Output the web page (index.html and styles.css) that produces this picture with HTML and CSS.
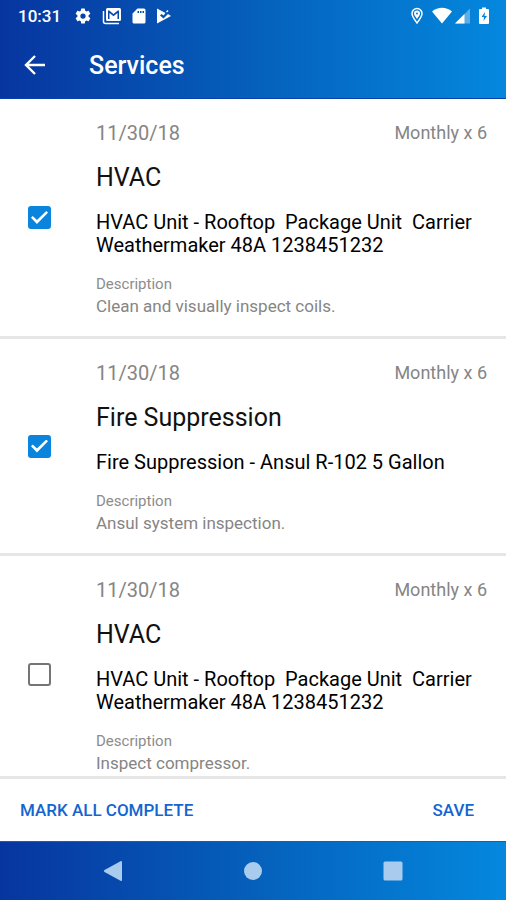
FILE: index.html
```html
<!DOCTYPE html>
<html lang="en">
<head>
  <meta charset="utf-8">
  <meta name="viewport" content="width=device-width, initial-scale=1">
  <title>Services</title>
  <link rel="stylesheet" href="styles.css">
</head>
<body>
  <header class="top">
    <div class="status">
      <span class="clock">10:31</span>
      <div class="status-left">
        <svg width="18" height="18" viewBox="0 0 24 24" aria-hidden="true"><path fill="currentColor" d="M19.4 13a7.500 7.500 0 0 0 0-2l2.100-1.650a.5.5 0 0 0 .12-.64l-2-3.460a.5.5 0 0 0-.61-.22l-2.490 1a7.300 7.300 0 0 0-1.690-.98l-.38-2.650A.5.5 0 0 0 14 2h-4a.5.5 0 0 0-.49.42l-.38 2.650c-.61.25-1.170.58-1.690.98l-2.490-1a.5.5 0 0 0-.61.22l-2 3.460a.5.5 0 0 0 .12.64L4.570 11a7.900 7.900 0 0 0 0 2l-2.110 1.650a.5.5 0 0 0-.12.64l2 3.460c.12.22.39.3.61.22l2.490-1c.52.4 1.080.73 1.690.98l.38 2.650c.03.24.24.42.49.42h4c.25 0 .46-.18.49-.42l.38-2.650c.61-.25 1.170-.58 1.690-.98l2.490 1c.22.08.49 0 .61-.22l2-3.460a.5.5 0 0 0-.12-.64zM12 15.500a3.500 3.500 0 1 1 0-7 3.500 3.500 0 0 1 0 7z"/></svg>
        <svg width="20" height="18" viewBox="0 0 20 18" aria-hidden="true"><path fill="none" stroke="currentColor" stroke-width="1.500" d="M1.500 4v10.500a2 2 0 0 0 2 2H17"/><path fill="currentColor" fill-rule="evenodd" d="M5.500 1h12A1.500 1.500 0 0 1 19 2.500v10a1.500 1.500 0 0 1-1.500 1.500h-12A1.500 1.500 0 0 1 4 12.500v-10A1.500 1.500 0 0 1 5.500 1zM6 3.500V12h1.500V6l4 3.300 4-3.300v6H17V3.500h-1.200l-4.300 3.600-4.300-3.600z"/></svg>
        <svg width="14" height="18" viewBox="0 0 14 18" aria-hidden="true"><path fill="currentColor" fill-rule="evenodd" d="M5.500 1.500H12A1.500 1.500 0 0 1 13.500 3v12a1.500 1.500 0 0 1-1.500 1.500H2A1.500 1.500 0 0 1 .5 15V6.500zM5.500 4v2H7V4zm2.500 0v2h1.500V4zm2.500 0v2H12V4z"/></svg>
        <svg width="16" height="18" viewBox="0 0 16 18" aria-hidden="true"><path fill="currentColor" d="M1 1.500 9.500 6 7.500 8.500 5.500 7 4 8.500l3.500 3L12 7l3 2L1 16.500z"/><path fill="currentColor" d="m10 4.500 1.500-1.500 1 1-1.500 1.500z"/></svg>
      </div>
      <div class="status-right">
        <svg width="14" height="18" viewBox="0 0 14 18" aria-hidden="true"><path fill="none" stroke="currentColor" stroke-width="1.500" d="M7 16C4 12 2 9.500 2 6.500a5 5 0 0 1 10 0C12 9.500 10 12 7 16z"/><path fill="currentColor" d="M7 3.500a3 3 0 0 1 3 3C10 8.500 8.500 9.500 7 12 5.500 9.500 4 8.500 4 6.500a3 3 0 0 1 3-3z"/><circle cx="7" cy="6.500" r="1" fill="#0777cf"/></svg>
        <svg class="wifi" width="20" height="18" viewBox="0 0 20 18" aria-hidden="true"><path fill="currentColor" d="M0 4.500C6-.4 14-.4 20 4.500L10 16.500z"/></svg>
        <svg width="15" height="18" viewBox="0 0 15 18" aria-hidden="true"><path fill="currentColor" opacity=".35" d="M15 1.500v15H0z"/><path fill="currentColor" d="M9.500 7v9.500H0z"/></svg>
        <svg class="battery" width="12" height="18" viewBox="0 0 12 18" aria-hidden="true"><path fill="currentColor" fill-rule="evenodd" d="M4 .5h4V2h2a1 1 0 0 1 1 1v13a1 1 0 0 1-1 1H2a1 1 0 0 1-1-1V3a1 1 0 0 1 1-1h2zM7 5 3.500 10H6l-.5 4L9 9H6.500z"/></svg>
      </div>
    </div>
    <div class="appbar">
      <button class="back" type="button" aria-label="Back">
        <svg width="22" height="20" viewBox="0 0 22 20" aria-hidden="true"><path fill="none" stroke="currentColor" stroke-width="2.400" d="M21 10H2.500M11 1 2 10l9 9"/></svg>
      </button>
      <h1>Services</h1>
    </div>
  </header>

  <main class="list">
    <article class="service">
      <input class="check" type="checkbox" id="s1" checked>
      <div class="body">
        <div class="meta"><time class="date" datetime="2018-11-30">11/30/18</time><span class="freq">Monthly x 6</span></div>
        <h2><label for="s1">HVAC</label></h2>
        <p class="unit">HVAC Unit - Rooftop  Package Unit  Carrier Weathermaker 48A 1238451232</p>
        <p class="caption">Description</p>
        <p class="text">Clean and visually inspect coils.</p>
      </div>
    </article>
    <article class="service">
      <input class="check" type="checkbox" id="s2" checked>
      <div class="body">
        <div class="meta"><time class="date" datetime="2018-11-30">11/30/18</time><span class="freq">Monthly x 6</span></div>
        <h2><label for="s2">Fire Suppression</label></h2>
        <p class="unit">Fire Suppression - Ansul R-102 5 Gallon</p>
        <p class="caption">Description</p>
        <p class="text">Ansul system inspection.</p>
      </div>
    </article>
    <article class="service">
      <input class="check" type="checkbox" id="s3">
      <div class="body">
        <div class="meta"><time class="date" datetime="2018-11-30">11/30/18</time><span class="freq">Monthly x 6</span></div>
        <h2><label for="s3">HVAC</label></h2>
        <p class="unit">HVAC Unit - Rooftop  Package Unit  Carrier Weathermaker 48A 1238451232</p>
        <p class="caption">Description</p>
        <p class="text">Inspect compressor.</p>
      </div>
    </article>
  </main>

  <footer class="actions">
    <button type="button">MARK ALL COMPLETE</button>
    <button type="button">SAVE</button>
  </footer>

  <nav class="system" aria-label="System">
    <button type="button" aria-label="Back"><svg width="20" height="22" viewBox="0 0 20 22"><path fill="currentColor" d="M17.500 1.200Q19 .5 19 2v18q0 1.500-1.500.8L1.500 12q-1.500-1 0-2z"/></svg></button>
    <button type="button" aria-label="Home"><svg width="20" height="22" viewBox="0 0 20 22"><circle cx="10" cy="11" r="9" fill="currentColor"/></svg></button>
    <button type="button" aria-label="Recent apps"><svg width="20" height="22" viewBox="0 0 20 22"><rect x=".5" y="1.500" width="19" height="19" rx="1.500" fill="currentColor"/></svg></button>
  </nav>
</body>
</html>
```
FILE: styles.css
```css
* {
  box-sizing: border-box;
}

body {
  margin: 0;
  height: 100vh;
  display: flex;
  flex-direction: column;
  background: #fff;
  color: #111;
  font-family: Roboto, "Liberation Sans", sans-serif;
}

h1, h2, p {
  margin: 0;
}

button {
  border: 0;
  padding: 0;
  background: none;
  color: inherit;
  font: inherit;
}

svg {
  display: block;
}

.top,
.system {
  flex: none;
  background: linear-gradient(90deg, #0735a0, #0560bb 50%, #0488de);
  color: #fff;
}

.top {
  border-bottom: 1px solid #0a41ab;
}

.status {
  display: flex;
  align-items: center;
  height: 32px;
  padding: 0 16px 0 18px;
}

.clock {
  font-size: 17px;
  font-weight: 500;
}

.status-left {
  display: flex;
  gap: 10px;
  margin-left: 13px;
}

.status-right {
  display: flex;
  margin-left: auto;
}

.wifi {
  margin: 0 3px 0 8px;
}

.battery {
  margin-left: 8px;
}

.appbar {
  display: flex;
  align-items: center;
  height: 66px;
  padding-left: 24px;
}

.back {
  margin-right: 43px;
}

h1 {
  font-size: 25px;
  font-weight: 500;
}

.list {
  flex: 1;
  min-height: 0;
  overflow: hidden;
}

.service {
  display: flex;
  align-items: center;
  padding: 0 19px 0 28px;
  border-bottom: 3px solid #e6e6e6;
}

.check {
  appearance: none;
  flex: none;
  display: grid;
  place-items: center;
  width: 23px;
  height: 23px;
  margin: 0 45px 0 0;
  border: 2px solid #757575;
  border-radius: 3px;
}

.check:checked {
  border-color: #0a84dc;
  background: #0a84dc;
}

.check:checked::after {
  content: "";
  width: 17px;
  height: 13px;
  background: #fff;
  clip-path: polygon(0 52%, 10% 38%, 35% 70%, 90% 0, 100% 14%, 35% 100%);
}

.body {
  flex: 1;
  min-width: 0;
  padding: 22px 0 19px;
}

.meta {
  display: flex;
  justify-content: space-between;
  margin-bottom: 18px;
  line-height: 24px;
  color: #858585;
}

.date {
  font-size: 20px;
}

.freq {
  font-size: 18px;
}

h2 {
  margin-bottom: 18px;
  font-size: 25px;
  font-weight: 400;
  line-height: 30px;
}

.unit {
  margin-bottom: 17px;
  color: #000;
  font-size: 20px;
  line-height: 23px;
  white-space: pre-wrap;
}

.caption {
  font-size: 15px;
  line-height: 21px;
  color: #8c8c8c;
}

.text {
  font-size: 17px;
  line-height: 22px;
  color: #858585;
}

.actions {
  flex: none;
  display: flex;
  justify-content: space-between;
  height: 65px;
  padding: 0 32px 0 20px;
  border-top: 3px solid #e6e6e6;
  color: #1565d0;
  font-size: 17px;
  font-weight: 500;
}

.system {
  display: flex;
  justify-content: center;
  gap: 120px;
  height: 59px;
  border-top: 1px solid #2a57ae;
  color: #a9cbed;
}
```
